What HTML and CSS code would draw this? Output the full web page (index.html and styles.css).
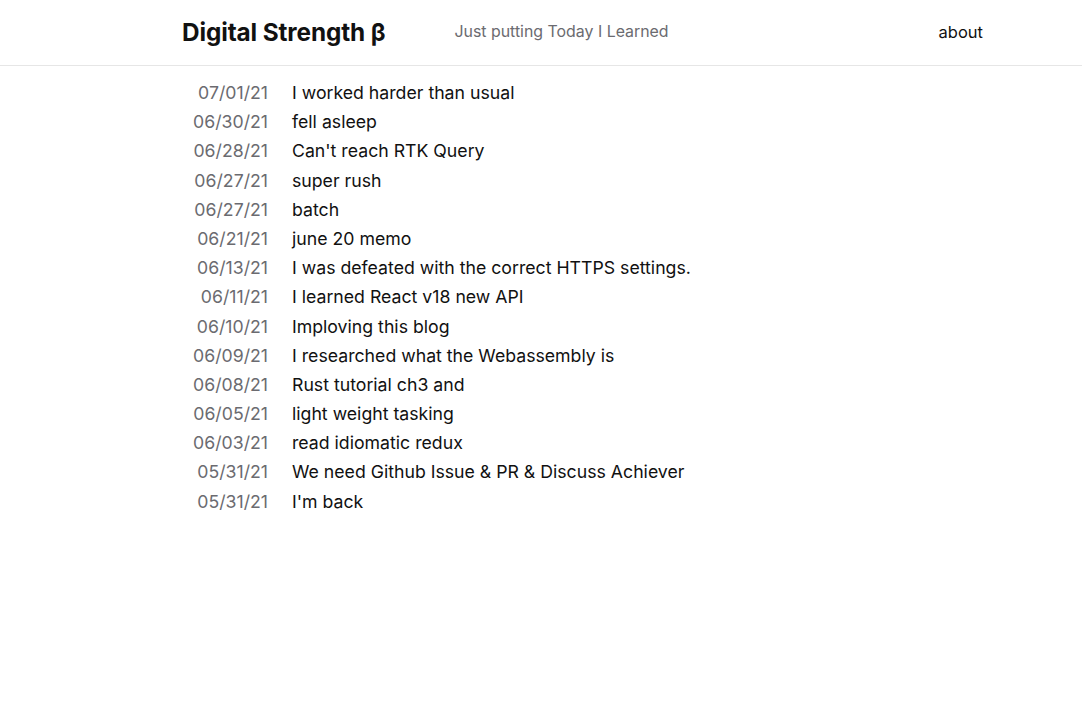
FILE: index.html
```html
<!DOCTYPE html>
<html lang="en">
<head>
<meta charset="utf-8">
<title>Digital Strength β</title>
<link rel="stylesheet" href="styles.css">
</head>
<body>
<header class="site-header">
  <div class="header-inner">
    <a class="brand" href="#">Digital Strength β</a>
    <span class="tagline">Just putting Today I Learned</span>
    <a class="nav-link" href="#">about</a>
  </div>
</header>
<main class="posts">
  <ul class="post-list">
    <li class="post"><span class="date">07/01/21</span><a class="title" href="#">I worked harder than usual</a></li>
    <li class="post"><span class="date">06/30/21</span><a class="title" href="#">fell asleep</a></li>
    <li class="post"><span class="date">06/28/21</span><a class="title" href="#">Can't reach RTK Query</a></li>
    <li class="post"><span class="date">06/27/21</span><a class="title" href="#">super rush</a></li>
    <li class="post"><span class="date">06/27/21</span><a class="title" href="#">batch</a></li>
    <li class="post"><span class="date">06/21/21</span><a class="title" href="#">june 20 memo</a></li>
    <li class="post"><span class="date">06/13/21</span><a class="title" href="#">I was defeated with the correct HTTPS settings.</a></li>
    <li class="post"><span class="date">06/11/21</span><a class="title" href="#">I learned React v18 new API</a></li>
    <li class="post"><span class="date">06/10/21</span><a class="title" href="#">Imploving this blog</a></li>
    <li class="post"><span class="date">06/09/21</span><a class="title" href="#">I researched what the Webassembly is</a></li>
    <li class="post"><span class="date">06/08/21</span><a class="title" href="#">Rust tutorial ch3 and</a></li>
    <li class="post"><span class="date">06/05/21</span><a class="title" href="#">light weight tasking</a></li>
    <li class="post"><span class="date">06/03/21</span><a class="title" href="#">read idiomatic redux</a></li>
    <li class="post"><span class="date">05/31/21</span><a class="title" href="#">We need Github Issue &amp; PR &amp; Discuss Achiever</a></li>
    <li class="post"><span class="date">05/31/21</span><a class="title" href="#">I'm back</a></li>
  </ul>
</main>
</body>
</html>
```
FILE: styles.css
```css
* { box-sizing: border-box; }
html, body {
  margin: 0;
  padding: 0;
  background: #fff;
  color: #111;
  font-family: Inter, "Noto Sans", "Liberation Sans", sans-serif;
}
a { color: inherit; text-decoration: none; }

.site-header {
  height: 66px;
  border-bottom: 1px solid #e6e6e6;
}
.header-inner {
  display: flex;
  align-items: center;
  height: 65px;
  padding: 0 99px 2px 182px;
}
.brand {
  font-size: 24.3px;
  font-weight: 700;
  letter-spacing: -0.1px;
  color: #111;
}
.tagline {
  margin-left: 69px;
  font-size: 15.9px;
  color: #6b6b70;
}
.nav-link {
  margin-left: auto;
  font-size: 16.5px;
  color: #111;
}

.posts {
  padding: 12px 0 0 0;
}
.post-list {
  list-style: none;
  margin: 0;
  padding: 0;
}
.post {
  display: flex;
  align-items: baseline;
  height: 29.2px;
  line-height: 29.2px;
  font-size: 17.7px;
}
.date {
  width: 268px;
  flex: none;
  text-align: right;
  color: #6b6b70;
}
.title {
  margin-left: 24px;
  color: #111;
}
```
